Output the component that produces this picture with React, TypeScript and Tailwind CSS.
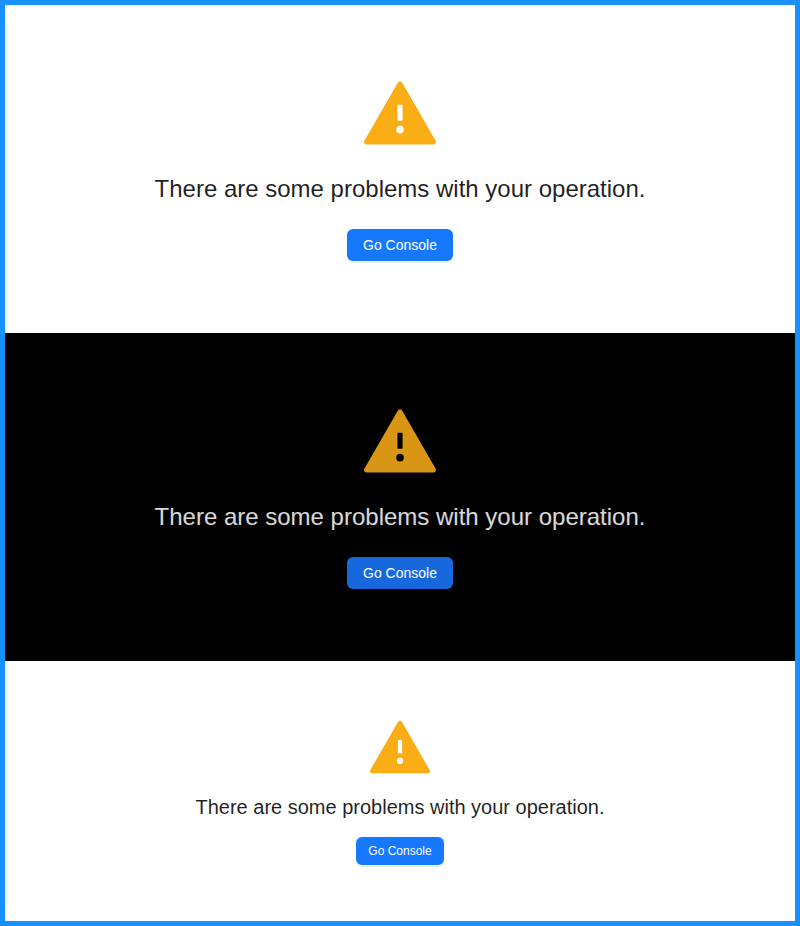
import React from "react";

const WARNING_PATH =
  "M955.7 856l-416-720c-6.2-10.7-16.9-16-27.7-16s-21.6 5.3-27.7 16l-416 720C56 877.4 71.4 904 96 904h832c24.6 0 40-26.6 27.7-48zM480 416c0-4.4 3.6-8 8-8h48c4.4 0 8 3.6 8 8v184c0 4.4-3.6 8-8 8h-48c-4.4 0-8-3.6-8-8V416zm32 352a48.01 48.01 0 010-96 48.01 48.01 0 010 96z";

function WarningIcon({ className }: { className: string }) {
  return (
    <svg viewBox="64 64 896 896" fill="currentColor" aria-hidden="true" className={className}>
      <path d={WARNING_PATH} />
    </svg>
  );
}

interface ResultProps {
  section: string;
  icon: string;
  title: string;
  button: string;
}

function Result({ section, icon, title, button }: ResultProps) {
  return (
    <section className={`flex flex-col items-center ${section}`}>
      <WarningIcon className={icon} />
      <div className={`text-center ${title}`}>There are some problems with your operation.</div>
      <button type="button" className={`border border-transparent text-white ${button}`}>
        Go Console
      </button>
    </section>
  );
}

export default function App() {
  return (
    <main className="h-[926px] border-[5px] border-[#1890ff] bg-white font-['Liberation_Sans',Arial,sans-serif]">
      <Result
        section="h-[328px] bg-white pt-[72px]"
        icon="size-[72px] text-[#faad14]"
        title="mt-6 mb-6 text-2xl leading-8 text-black/88"
        button="h-8 rounded-md bg-[#1677ff] px-[15px] text-sm leading-[22px] shadow-[0_2px_0_rgba(5,145,255,0.1)]"
      />
      <Result
        section="h-[328px] bg-black pt-[72px]"
        icon="size-[72px] text-[#d89614]"
        title="mt-6 mb-6 text-2xl leading-8 text-white/85"
        button="h-8 rounded-md bg-[#1668dc] px-[15px] text-sm leading-[22px]"
      />
      <Result
        section="h-[260px] bg-white pt-14"
        icon="size-[60px] text-[#faad14]"
        title="mt-4 mb-4 text-xl leading-7 text-black/88"
        button="h-7 rounded-md bg-[#1677ff] px-[11px] text-xs leading-5 shadow-[0_2px_0_rgba(5,145,255,0.1)]"
      />
    </main>
  );
}
